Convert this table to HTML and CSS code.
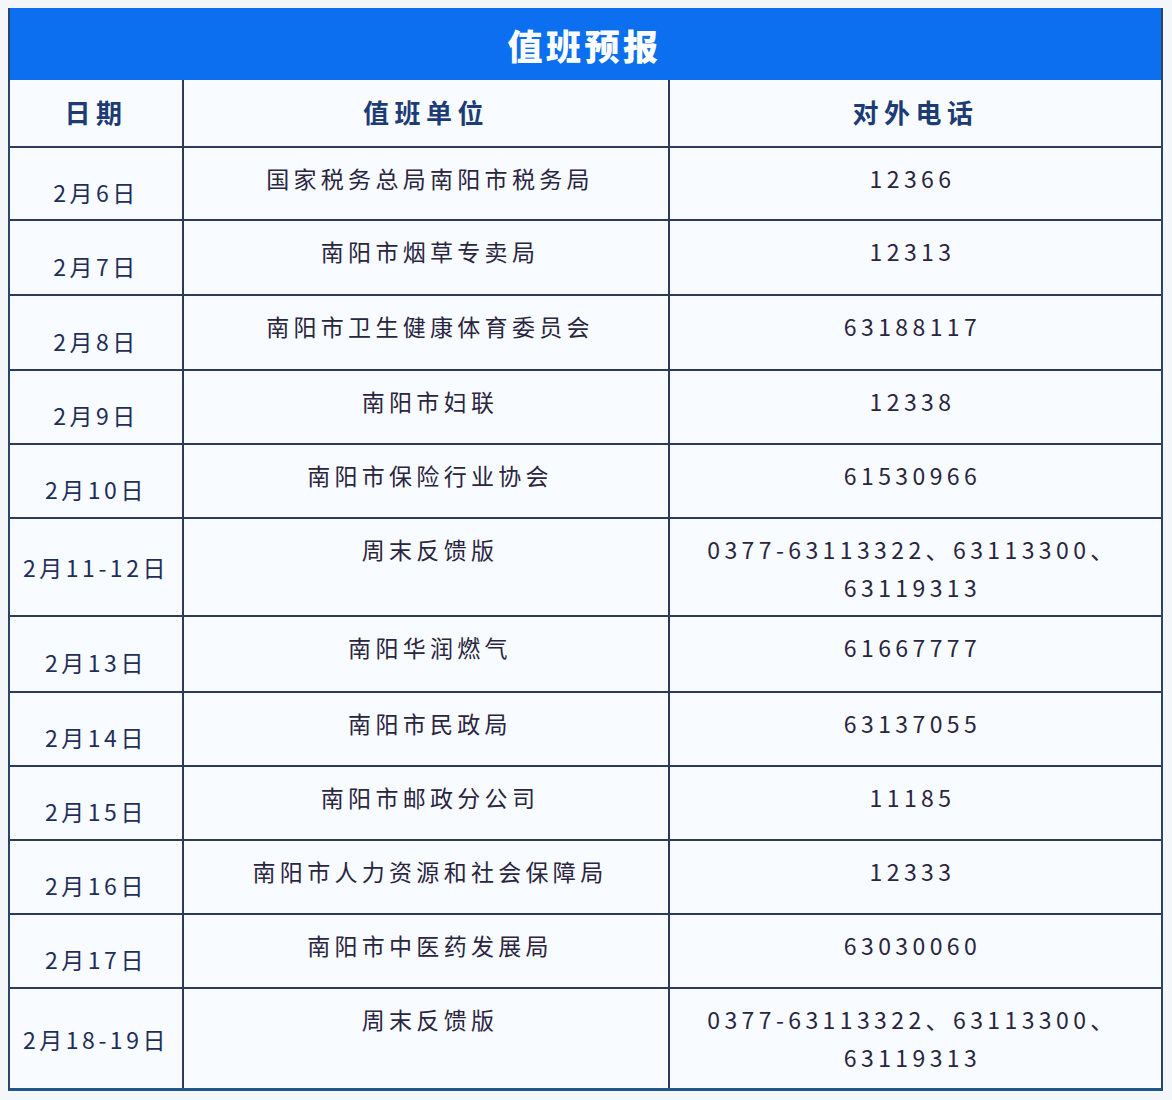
FILE: index.html
```html
<!DOCTYPE html>
<html lang="zh-CN">
<head>
<meta charset="utf-8">
<title>值班预报</title>
<link rel="stylesheet" href="styles.css">
</head>
<body>
<div class="sheet">
  <div class="title">值班预报</div>
  <table class="duty">
    <colgroup>
      <col class="c-date"><col class="c-unit"><col class="c-phone">
    </colgroup>
    <thead>
      <tr class="head">
        <th>日期</th><th>值班单位</th><th>对外电话</th>
      </tr>
    </thead>
    <tbody>
      <tr class="row row-first"><td class="date">2月6日</td><td class="unit">国家税务总局南阳市税务局</td><td class="phone">12366</td></tr>
      <tr class="row row-mid"><td class="date">2月7日</td><td class="unit">南阳市烟草专卖局</td><td class="phone">12313</td></tr>
      <tr class="row row-mid"><td class="date">2月8日</td><td class="unit">南阳市卫生健康体育委员会</td><td class="phone">63188117</td></tr>
      <tr class="row"><td class="date">2月9日</td><td class="unit">南阳市妇联</td><td class="phone">12338</td></tr>
      <tr class="row"><td class="date">2月10日</td><td class="unit">南阳市保险行业协会</td><td class="phone">61530966</td></tr>
      <tr class="row row-double"><td class="date">2月11-12日</td><td class="unit">周末反馈版</td><td class="phone">0377-63113322、63113300、<br>63119313</td></tr>
      <tr class="row row-tall"><td class="date">2月13日</td><td class="unit">南阳华润燃气</td><td class="phone">61667777</td></tr>
      <tr class="row"><td class="date">2月14日</td><td class="unit">南阳市民政局</td><td class="phone">63137055</td></tr>
      <tr class="row"><td class="date">2月15日</td><td class="unit">南阳市邮政分公司</td><td class="phone">11185</td></tr>
      <tr class="row"><td class="date">2月16日</td><td class="unit">南阳市人力资源和社会保障局</td><td class="phone">12333</td></tr>
      <tr class="row"><td class="date">2月17日</td><td class="unit">南阳市中医药发展局</td><td class="phone">63030060</td></tr>
      <tr class="row row-double row-last"><td class="date">2月18-19日</td><td class="unit">周末反馈版</td><td class="phone">0377-63113322、63113300、<br>63119313</td></tr>
    </tbody>
  </table>
</div>
</body>
</html>
```

FILE: styles.css
```css
html, body {
  margin: 0;
  padding: 0;
  background: #f4f7fa;
}
body {
  padding: 8px 9px 0 8px;
  font-family: "Noto Sans CJK SC", "Noto Sans", sans-serif;
}
.sheet {
  width: 1155px;
  background: #f8fbff;
  border-left: 2px solid #2c4466;
  border-right: 2px solid #2c4466;
  border-bottom: 3px solid #1f5688;
  box-sizing: border-box;
}
.title {
  height: 72px;
  background: #0b6ff0;
  color: #ffffff;
  font-size: 35px;
  font-weight: 900;
  letter-spacing: 3.5px;
  text-align: center;
  line-height: 74px;
  padding-right: 2px;
}
.duty {
  width: 100%;
  border-collapse: collapse;
  table-layout: fixed;
}
.c-date { width: 173px; }
.c-unit { width: 486px; }
.c-phone { width: auto; }
.duty th, .duty td {
  border: 2px solid #2c3c58;
  text-align: center;
  padding: 0;
}
.duty tr:first-child th { border-top: none; }
.duty th:first-child, .duty td:first-child { border-left: none; }
.duty th:last-child, .duty td:last-child { border-right: none; }
.duty tbody tr:last-child td { border-bottom: none; }
.head { height: 67px; }
.head th {
  font-size: 26px;
  font-weight: 700;
  color: #1d3b74;
  letter-spacing: 5.5px;
  vertical-align: middle;
  padding-bottom: 4px;
}
.row { height: 74px; }
.row-first { height: 73px; }
.row-mid { height: 75px; }
.row-double { height: 98px; }
.row-tall { height: 76px; }
.row-last { height: 100px; }
.date {
  font-size: 23px;
  color: #1f2f58;
  letter-spacing: 3.5px;
  vertical-align: middle;
  padding-top: 16px !important;
}
.row-double .date { padding-top: 0 !important; }
.unit, .phone {
  font-size: 23px;
  color: #2a2540;
  letter-spacing: 4.3px;
  line-height: 38px;
  vertical-align: top;
  padding-top: 11px !important;
}
.unit { padding-left: 8px !important; }
.phone { letter-spacing: 4.4px; padding-right: 6px !important; }
```
